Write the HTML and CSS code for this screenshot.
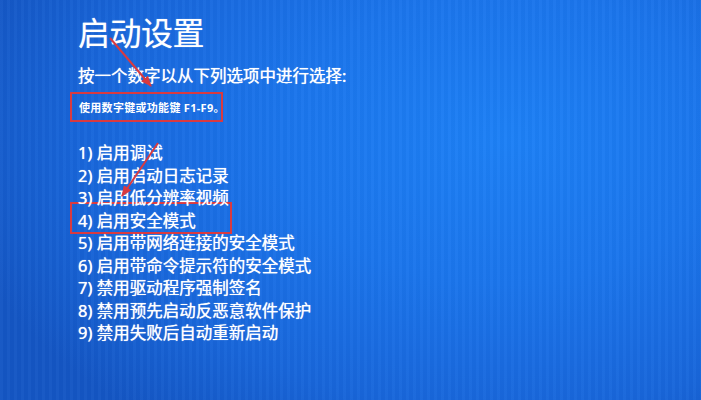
FILE: index.html
```html
<!DOCTYPE html>
<html lang="zh-CN">
<head>
<meta charset="utf-8">
<title>启动设置</title>
<link rel="stylesheet" href="styles.css">
</head>
<body>
<div class="screen">
  <h1 class="title">启动设置</h1>
  <p class="subtitle">按一个数字以从下列选项中进行选择:</p>
  <div class="hint">使用数字键或功能键 F1-F9。</div>
  <ol class="options">
    <li>1) 启用调试</li>
    <li>2) 启用启动日志记录</li>
    <li>3) 启用低分辨率视频</li>
    <li class="marked">4) 启用安全模式</li>
    <li>5) 启用带网络连接的安全模式</li>
    <li>6) 启用带命令提示符的安全模式</li>
    <li>7) 禁用驱动程序强制签名</li>
    <li>8) 禁用预先启动反恶意软件保护</li>
    <li>9) 禁用失败后自动重新启动</li>
  </ol>
  <svg class="arrows" width="701" height="400" viewBox="0 0 701 400" aria-hidden="true">
    <defs>
      <marker id="head" markerWidth="11" markerHeight="9" refX="10" refY="4.5" orient="auto" markerUnits="userSpaceOnUse">
        <path d="M0,0 L11,4.5 L0,9 Z" fill="#d93a40"/>
      </marker>
    </defs>
    <line x1="110" y1="38" x2="151" y2="86" stroke="#d93a40" stroke-width="2" marker-end="url(#head)"/>
    <line x1="158" y1="143" x2="122" y2="196" stroke="#d93a40" stroke-width="2" marker-end="url(#head)"/>
  </svg>
</div>
</body>
</html>
```
FILE: styles.css
```css
html, body {
  margin: 0;
  padding: 0;
  width: 701px;
  height: 400px;
  overflow: hidden;
}

body {
  background:
    repeating-linear-gradient(90deg, rgba(255,255,255,0.025) 0 3px, rgba(0,0,0,0.02) 3px 7px),
    radial-gradient(ellipse 80% 90% at 72% 35%, #1d80f6 0%, #1b75ec 40%, #1866da 75%, #1456c4 100%);
  font-family: "Noto Sans", "Noto Sans CJK SC", sans-serif;
  color: #ffffff;
}

.screen {
  position: relative;
  width: 701px;
  height: 400px;
  box-sizing: border-box;
  padding: 17px 0 0 78px;
}

.title {
  margin: 0;
  font-size: 32px;
  line-height: 32px;
  font-weight: 400;
  letter-spacing: -0.5px;
  text-shadow: 0 0 1px rgba(255,255,255,0.6);
}

.subtitle {
  margin: 19px 0 0 0;
  font-size: 16.5px;
  line-height: 16.5px;
  font-weight: 400;
  text-shadow: 0 0 0.8px #ffffff;
}

.hint {
  display: block;
  box-sizing: border-box;
  width: 153px;
  margin: 7.5px 0 0 -8px;
  padding: 7.5px 0 7.5px 7px;
  border: 2px solid #d93a40;
  font-size: 11px;
  line-height: 11px;
  font-weight: 700;
  letter-spacing: 0.3px;
  white-space: nowrap;
}

.options {
  list-style: none;
  margin: 20px 0 0 0;
  padding: 0;
  font-size: 16.5px;
  line-height: 22.5px;
  text-shadow: 0 0 0.8px #ffffff;
}

.options li {
  white-space: nowrap;
}

.options .marked {
  box-sizing: border-box;
  width: 162px;
  margin: -7.5px 0 -2px -8px;
  padding: 5.5px 0 0 6px;
  border: 2px solid #d93a40;
}

.arrows {
  position: absolute;
  left: 0;
  top: 0;
}
```
